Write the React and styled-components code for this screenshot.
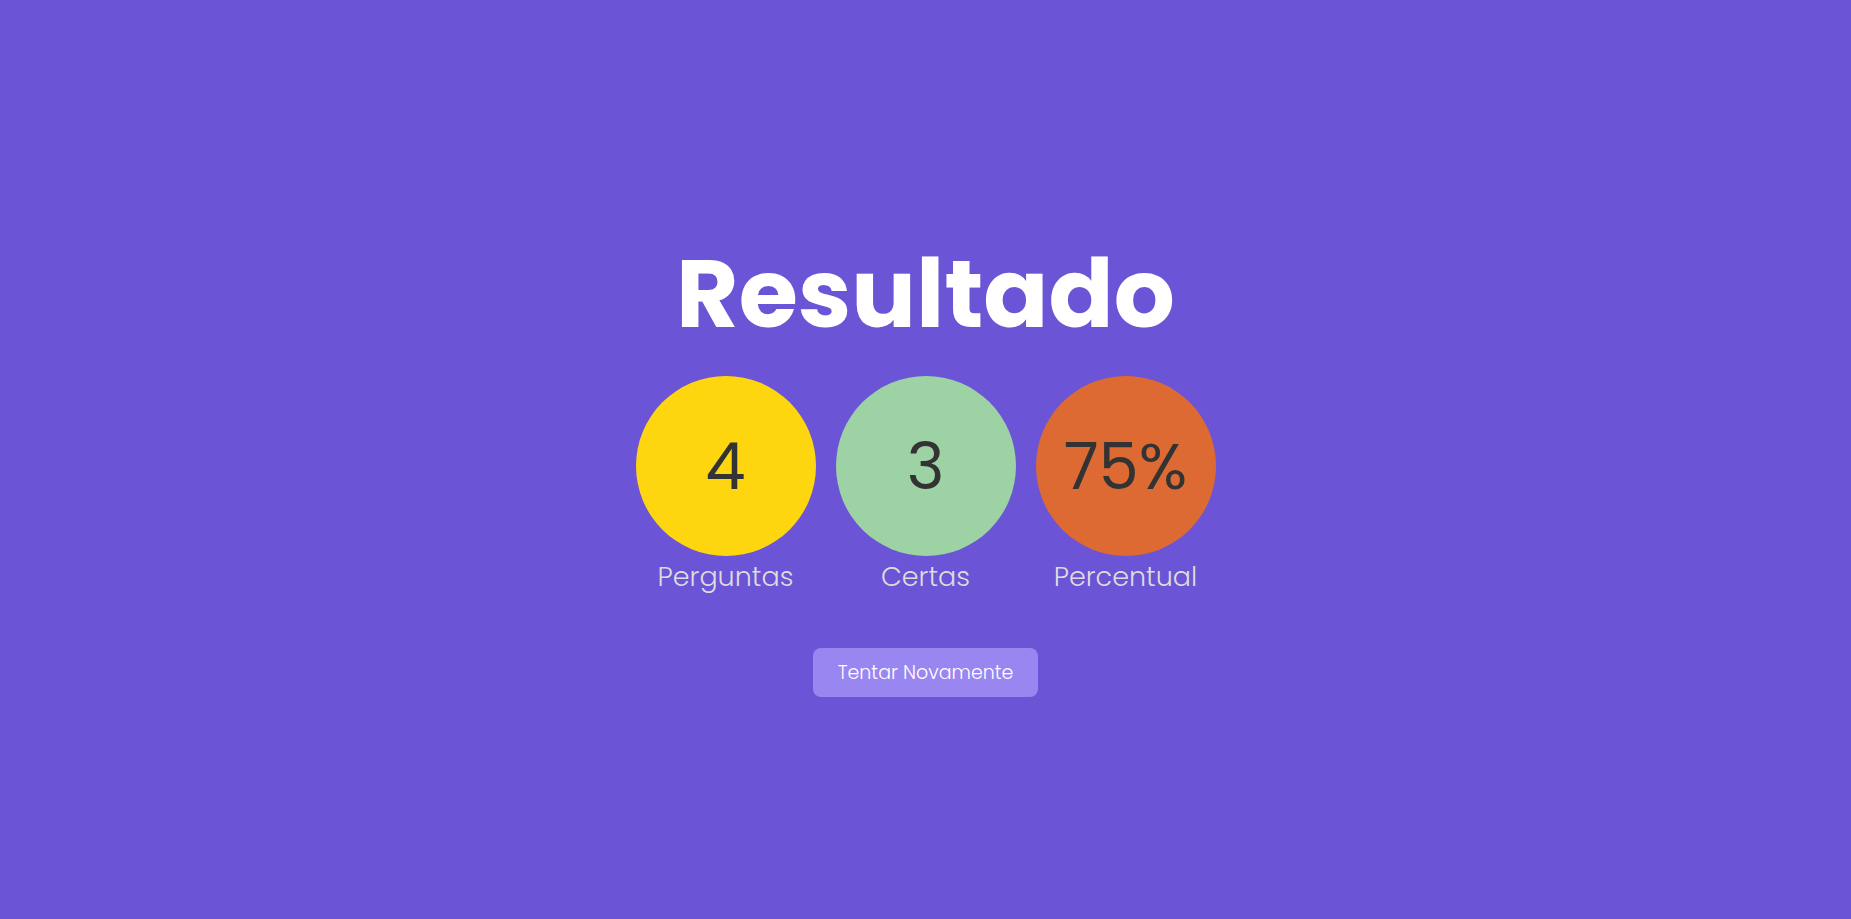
import React from "react";
import styled, { createGlobalStyle } from "styled-components";

const stats = [
  { value: "4", label: "Perguntas", background: "#fdd60f" },
  { value: "3", label: "Certas", background: "#9cd2a4" },
  { value: "75%", label: "Percentual", background: "#de6a33" },
];

const Statistic = ({ value, label, background }) => {
  return (
    <StatisticBox>
      <Circle $background={background}>{value}</Circle>
      <Label>{label}</Label>
    </StatisticBox>
  );
};

const App = () => {
  return (
    <Main>
      <GlobalStyle />
      <Title>Resultado</Title>
      <Statistics>
        {stats.map((stat) => (
          <Statistic key={stat.label} {...stat} />
        ))}
      </Statistics>
      <Button type="button">Tentar Novamente</Button>
    </Main>
  );
};

export default App;

const GlobalStyle = createGlobalStyle`
  * {
    box-sizing: border-box;
  }

  body {
    margin: 0;
    background-color: #6b54d6;
    font-family: Poppins, Inter, sans-serif;
  }
`;

const Main = styled.main`
  display: flex;
  flex-direction: column;
  align-items: center;
  justify-content: center;
  min-height: 100vh;
  color: #fff;
`;

const Title = styled.h1`
  margin: 0 0 10px;
  font-size: 96px;
  font-weight: 700;
  line-height: 144px;
`;

const Statistics = styled.div`
  display: flex;
  gap: 20px;
`;

const StatisticBox = styled.div`
  display: flex;
  flex-direction: column;
  align-items: center;
`;

const Circle = styled.div`
  display: flex;
  align-items: center;
  justify-content: center;
  width: 180px;
  height: 180px;
  border-radius: 50%;
  background-color: ${(props) => props.$background};
  color: #333;
  font-size: 64px;
`;

const Label = styled.span`
  color: #ddd;
  font-size: 27px;
  font-weight: 300;
  line-height: 42px;
`;

const Button = styled.button`
  margin-top: 50px;
  padding: 10px 25px;
  border: none;
  border-radius: 8px;
  background-color: #9a86f0;
  color: #fff;
  font-family: inherit;
  font-size: 19px;
  font-weight: 300;
  line-height: 29px;
`;
